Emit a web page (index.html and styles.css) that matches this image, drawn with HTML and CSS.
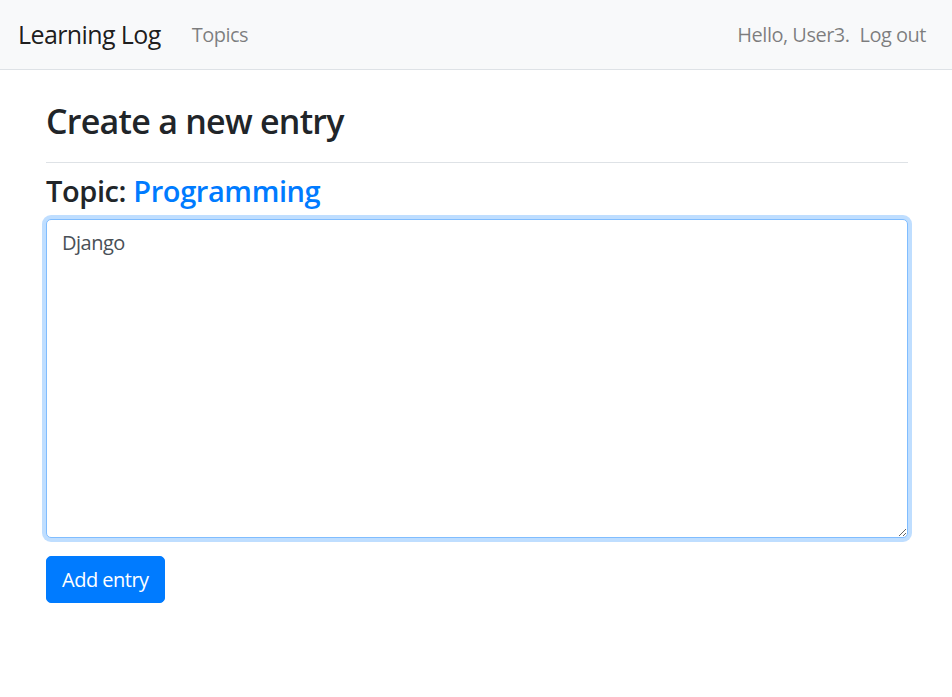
FILE: index.html
```html
<!DOCTYPE html>
<html lang="en">
<head>
<meta charset="utf-8">
<title>Learning Log</title>
<link rel="stylesheet" href="styles.css">
</head>
<body>
<nav class="navbar">
  <a class="brand" href="#">Learning Log</a>
  <ul class="nav-left">
    <li><a class="nav-link" href="#">Topics</a></li>
  </ul>
  <ul class="nav-right">
    <li><span class="nav-text">Hello, User3.</span></li>
    <li><a class="nav-link" href="#">Log out</a></li>
  </ul>
</nav>
<main class="main">
  <div class="page-header">
    <h3 class="title">Create a new entry</h3>
  </div>
  <h4 class="topic">Topic: <a class="topic-link" href="#">Programming</a></h4>
  <form class="entry-form">
    <div class="form-group">
      <textarea class="form-control" name="text" autofocus>Django</textarea>
    </div>
    <button class="btn-primary" type="button">Add entry</button>
  </form>
</main>
</body>
</html>
```
FILE: styles.css
```css
* { box-sizing: border-box; }
html, body { margin: 0; padding: 0; }
body {
  font-family: "Open Sans", "Noto Sans", sans-serif;
  font-size: 20px;
  line-height: 1.5;
  letter-spacing: -0.5px;
  color: #212529;
  background: #fff;
}
a { text-decoration: none; }
ul { list-style: none; margin: 0; padding: 0; }

.navbar {
  display: flex;
  align-items: center;
  height: 70px;
  padding: 0 16px 0 18px;
  background: #f8f9fa;
  border-bottom: 1px solid #dee2e6;
}
.brand {
  font-size: 25px;
  line-height: 1.5;
  letter-spacing: -0.6px;
  color: rgba(0,0,0,.9);
  margin-right: 31px;
}
.nav-left { display: flex; flex: 1; }
.nav-right { display: flex; align-items: center; }
.nav-link, .nav-text {
  display: block;
  padding: 10px 10px;
  color: rgba(0,0,0,.5);
  font-size: 20px;
}
.nav-left .nav-link { padding-left: 0; }
.nav-text { padding-right: 0; }

.main {
  padding: 0 44px 0 46px;
}
.page-header {
  margin-top: 30px;
  padding-bottom: 20px;
  border-bottom: 1px solid #dee2e6;
  margin-bottom: 10px;
}
.title {
  margin: 0;
  font-size: 34px;
  font-weight: 600;
  line-height: 42px;
  letter-spacing: -0.75px;
}
.topic {
  margin: 0 0 10px;
  font-size: 29px;
  font-weight: 600;
  line-height: 36px;
  letter-spacing: -0.4px;
}
.topic-link { color: #007bff; }

.form-group { margin-bottom: 18px; }
.form-control {
  display: block;
  width: 100%;
  height: 319px;
  padding: 7.5px 15px;
  font-family: inherit;
  font-size: 20px;
  line-height: 1.5;
  letter-spacing: -0.5px;
  color: #495057;
  background: #fff;
  border: 1px solid #80bdff;
  border-radius: 5px;
  box-shadow: 0 0 0 4px rgba(0,123,255,.25);
  outline: 0;
  resize: vertical;
  margin: 0;
}
.btn-primary {
  display: inline-block;
  font-family: inherit;
  font-size: 20px;
  line-height: 1.5;
  letter-spacing: -0.5px;
  padding: 7.5px 15px;
  color: #fff;
  background: #007bff;
  border: 1px solid #007bff;
  border-radius: 5px;
  cursor: pointer;
}
```
